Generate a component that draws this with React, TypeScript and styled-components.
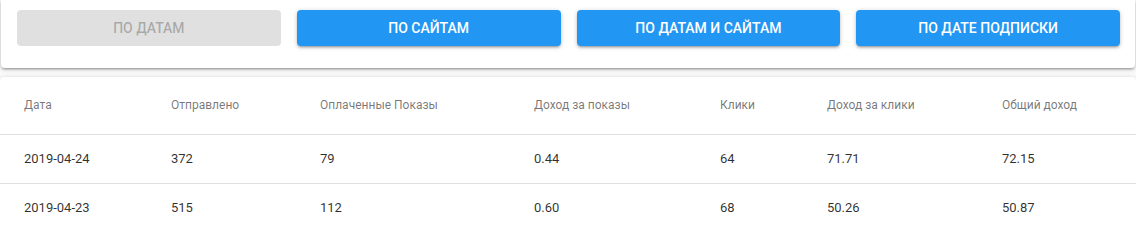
import React from "react";
import styled, { createGlobalStyle } from "styled-components";

/**CSS *******************************************/
const GlobalStyle = createGlobalStyle`
    *, *::before, *::after {
        box-sizing: border-box;
    }
    html, body {
        margin: 0;
        padding: 0;
        background-color: #fafafa;
        font-family: Roboto, "Liberation Sans", Arial, sans-serif;
    }
`;
const DivPage = styled.div`
    width: 1136px;
`;
const DivButtonsPanel = styled.div`
    display: grid;
    grid-template-columns: repeat(4, 1fr);
    gap: 16px;
    margin: 0 1px;
    padding: 10px 15px 22px 16px;
    background-color: #fff;
    border-radius: 0 0 4px 4px;
    box-shadow: 0px 1px 5px 0px rgba(0, 0, 0, 0.2), 0px 2px 2px 0px rgba(0, 0, 0, 0.14), 0px 3px 1px -2px rgba(0, 0, 0, 0.12);
`;
const ButtonFilter = styled.button<{ $disabled?: boolean }>`
    height: 36px;
    border: none;
    border-radius: 4px;
    font-family: Roboto, "Liberation Sans", Arial, sans-serif;
    font-size: 14px;
    font-weight: 500;
    text-transform: uppercase;
    color: ${p => (p.$disabled ? "rgba(0, 0, 0, 0.26)" : "#fff")};
    background-color: ${p => (p.$disabled ? "rgba(0, 0, 0, 0.12)" : "#2196f3")};
    box-shadow: ${p =>
        p.$disabled
            ? "none"
            : "0px 1px 5px 0px rgba(0, 0, 0, 0.2), 0px 2px 2px 0px rgba(0, 0, 0, 0.14), 0px 3px 1px -2px rgba(0, 0, 0, 0.12)"};
    cursor: ${p => (p.$disabled ? "default" : "pointer")};
`;
const DivTablePaper = styled.div`
    margin-top: 9px;
    background-color: #fff;
    border-radius: 4px;
    box-shadow: 0px 1px 5px 0px rgba(0, 0, 0, 0.2), 0px 2px 2px 0px rgba(0, 0, 0, 0.14), 0px 3px 1px -2px rgba(0, 0, 0, 0.12);
`;
const TableStats = styled.table`
    width: 100%;
    border-collapse: collapse;
    table-layout: fixed;
`;
const ThStats = styled.th<{ $width: number }>`
    width: ${p => p.$width}px;
    height: 57px;
    padding: 0 8px 0 24px;
    text-align: left;
    font-size: 12px;
    font-weight: 400;
    color: rgba(0, 0, 0, 0.54);
    border-bottom: 1px solid rgba(224, 224, 224, 1);
    white-space: nowrap;
`;
const TdStats = styled.td`
    height: 49px;
    padding: 0 8px 0 24px;
    font-size: 13px;
    color: rgba(0, 0, 0, 0.82);
    border-bottom: 1px solid rgba(224, 224, 224, 1);
`;
/**CSS end****************************************/

type StatRow = {
    date: string;
    sent: number;
    paidViews: number;
    viewsIncome: string;
    clicks: number;
    clicksIncome: string;
    total: string;
};

const columns = [
    { title: "Дата", width: 147 },
    { title: "Отправлено", width: 149 },
    { title: "Оплаченные Показы", width: 214 },
    { title: "Доход за показы", width: 186 },
    { title: "Клики", width: 107 },
    { title: "Доход за клики", width: 175 },
    { title: "Общий доход", width: 158 },
];

const rows: StatRow[] = [
    { date: "2019-04-24", sent: 372, paidViews: 79, viewsIncome: "0.44", clicks: 64, clicksIncome: "71.71", total: "72.15" },
    { date: "2019-04-23", sent: 515, paidViews: 112, viewsIncome: "0.60", clicks: 68, clicksIncome: "50.26", total: "50.87" },
];

const filters = ["По датам", "По сайтам", "По датам и сайтам", "По дате подписки"];

const App = () => {
    return (
        <DivPage>
            <GlobalStyle />
            <DivButtonsPanel>
                {filters.map((f, i) => (
                    <ButtonFilter key={f} $disabled={i === 0} disabled={i === 0}>
                        {f}
                    </ButtonFilter>
                ))}
            </DivButtonsPanel>
            <DivTablePaper>
                <TableStats>
                    <thead>
                        <tr>
                            {columns.map(c => (
                                <ThStats key={c.title} $width={c.width}>{c.title}</ThStats>
                            ))}
                        </tr>
                    </thead>
                    <tbody>
                        {rows.map(r => (
                            <tr key={r.date}>
                                <TdStats>{r.date}</TdStats>
                                <TdStats>{r.sent}</TdStats>
                                <TdStats>{r.paidViews}</TdStats>
                                <TdStats>{r.viewsIncome}</TdStats>
                                <TdStats>{r.clicks}</TdStats>
                                <TdStats>{r.clicksIncome}</TdStats>
                                <TdStats>{r.total}</TdStats>
                            </tr>
                        ))}
                    </tbody>
                </TableStats>
            </DivTablePaper>
        </DivPage>
    );
};

export default App;
